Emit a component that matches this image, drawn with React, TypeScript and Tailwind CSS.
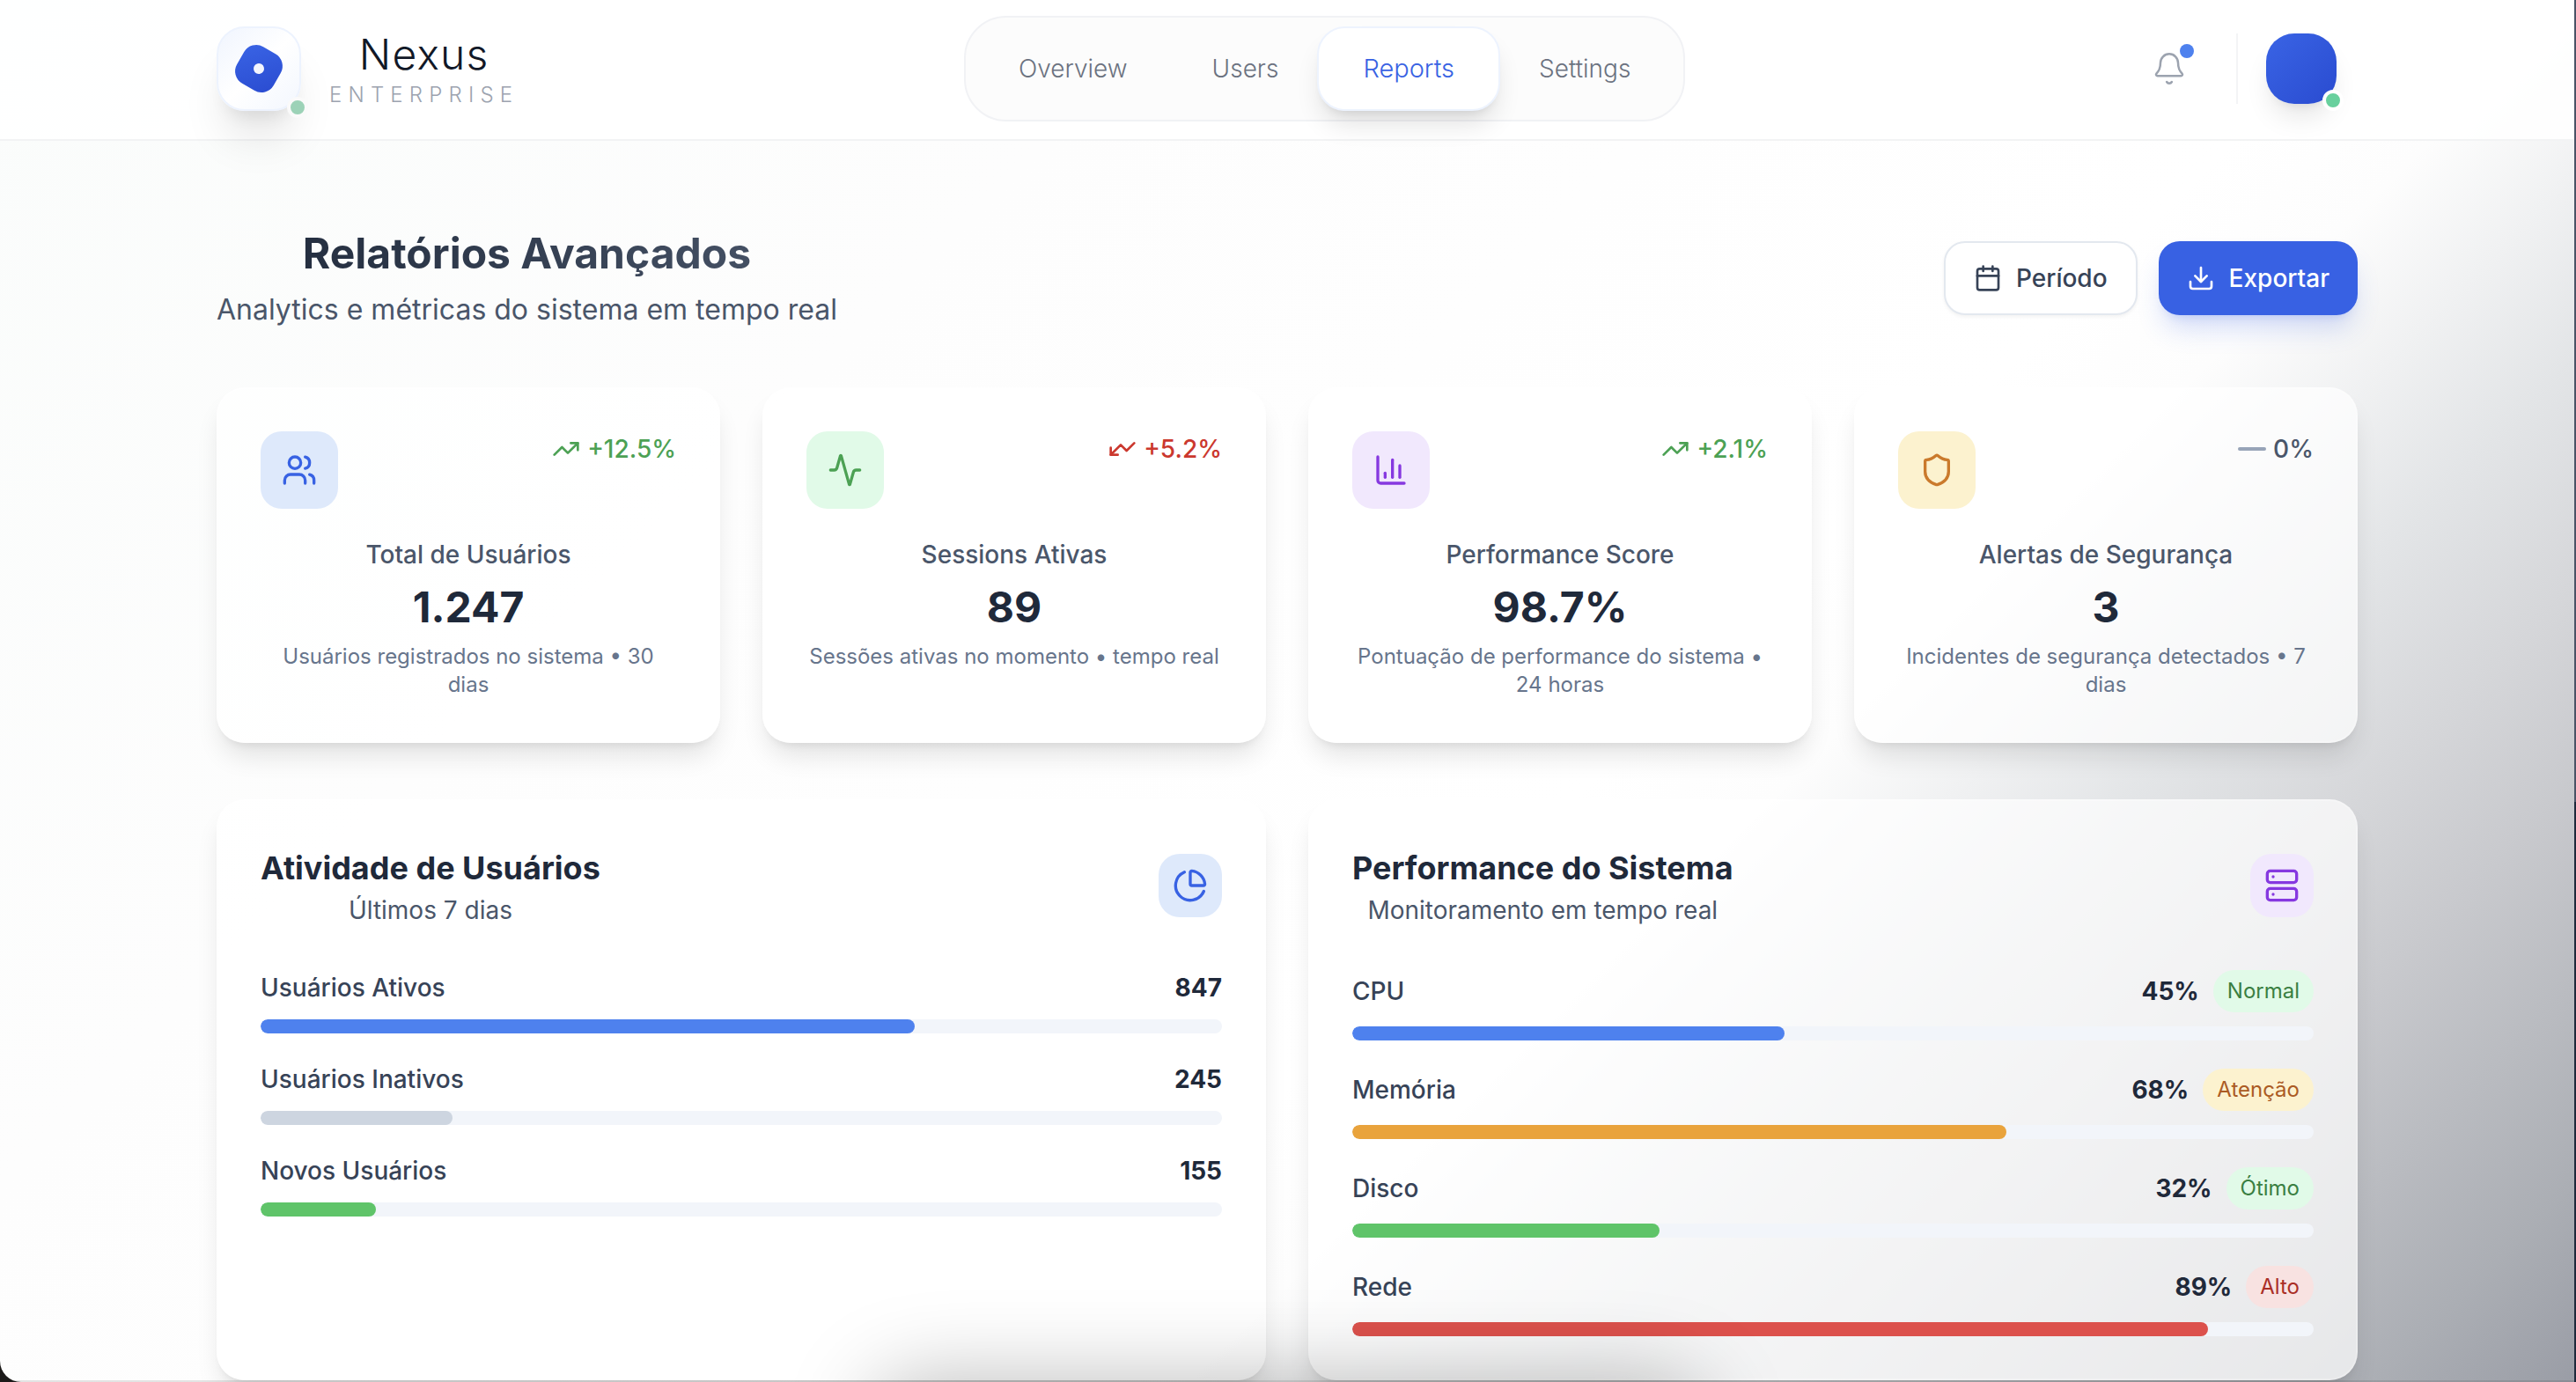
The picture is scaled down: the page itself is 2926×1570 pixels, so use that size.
import React from "react";
import {
  Activity,
  Bell,
  Calendar,
  ChartColumn,
  ChartPie,
  Download,
  Server,
  Shield,
  TrendingUp,
  Users,
  type LucideIcon,
} from "lucide-react";

const CARD =
  "rounded-[32px] border-2 border-white/20 bg-white/70 p-12 shadow-[0_20px_30px_-6px_rgba(0,0,0,0.11),0_8px_12px_-8px_rgba(0,0,0,0.11)]";

const navItems = ["Overview", "Users", "Reports", "Settings"];

type Trend = "up" | "down" | "flat";

interface Stat {
  title: string;
  value: string;
  note: string;
  change: string;
  trend: Trend;
  icon: LucideIcon;
  tone: string;
}

const stats: Stat[] = [
  {
    title: "Total de Usuários",
    value: "1.247",
    note: "Usuários registrados no sistema • 30 dias",
    change: "+12.5%",
    trend: "up",
    icon: Users,
    tone: "bg-[#dee9fb] text-[#3862e3]",
  },
  {
    title: "Sessions Ativas",
    value: "89",
    note: "Sessões ativas no momento • tempo real",
    change: "+5.2%",
    trend: "down",
    icon: Activity,
    tone: "bg-[#e1fae8] text-[#4ca154]",
  },
  {
    title: "Performance Score",
    value: "98.7%",
    note: "Pontuação de performance do sistema • 24 horas",
    change: "+2.1%",
    trend: "up",
    icon: ChartColumn,
    tone: "bg-[#f1e8fd] text-[#8638e0]",
  },
  {
    title: "Alertas de Segurança",
    value: "3",
    note: "Incidentes de segurança detectados • 7 dias",
    change: "0%",
    trend: "flat",
    icon: Shield,
    tone: "bg-[#fcf2cf] text-[#ca7a2c]",
  },
];

interface Metric {
  label: string;
  value: string;
  percent: number;
  fill: string;
  badge?: string;
  badgeTone?: string;
}

const activity: Metric[] = [
  { label: "Usuários Ativos", value: "847", percent: 68, fill: "bg-[#4e81ee]" },
  { label: "Usuários Inativos", value: "245", percent: 20, fill: "bg-[#cdd5e0]" },
  { label: "Novos Usuários", value: "155", percent: 12, fill: "bg-[#5fc469]" },
];

const system: Metric[] = [
  { label: "CPU", value: "45%", percent: 45, fill: "bg-[#4e81ee]", badge: "Normal", badgeTone: "bg-[#e1fae8] text-[#3a7f42]" },
  { label: "Memória", value: "68%", percent: 68, fill: "bg-[#e9a33c]", badge: "Atenção", badgeTone: "bg-[#fcf2cf] text-[#ab5b24]" },
  { label: "Disco", value: "32%", percent: 32, fill: "bg-[#5fc469]", badge: "Ótimo", badgeTone: "bg-[#e1fae8] text-[#3a7f42]" },
  { label: "Rede", value: "89%", percent: 89, fill: "bg-[#dc514c]", badge: "Alto", badgeTone: "bg-[#f8e2e1] text-[#aa2e26]" },
];

function Logo() {
  return (
    <div className="relative flex size-24 items-center justify-center rounded-[32px] border-2 border-[#edf3fe] bg-linear-to-br from-[#f0f5fe] via-white to-[#f3f7fe] shadow-[0_40px_50px_-10px_rgba(0,0,0,0.1),0_16px_20px_-12px_rgba(0,0,0,0.1)]">
      <div className="flex size-12 rotate-[30deg] items-center justify-center rounded-2xl bg-linear-to-br from-[#3a64e5] to-[#2a4bd0]">
        <span className="size-3 rounded-full bg-white/95" />
      </div>
      <span className="absolute -right-2.5 -bottom-2.5 size-6 rounded-full border-4 border-[#fafafa] bg-[#9cd2b7]" />
    </div>
  );
}

function Header() {
  return (
    <header className="relative z-10 border-b-2 border-[#f2f3f4] bg-white/90 pb-0.5">
      <div className="mx-auto flex h-[156px] max-w-[2560px] items-center justify-between px-16">
        <div className="flex items-center gap-8">
          <Logo />
          <div className="text-center">
            <div className="text-5xl leading-[60px] font-light tracking-wide text-[#111827]">Nexus</div>
            <div className="text-2xl leading-8 font-light tracking-[0.3em] text-[#9ca3af]">ENTERPRISE</div>
          </div>
        </div>

        <nav className="flex h-[120px] items-center rounded-[48px] border-2 border-[#f1f2f5] bg-[#fcfcfc] px-3">
          {navItems.map((item) =>
            item === "Reports" ? (
              <button
                key={item}
                type="button"
                aria-current="page"
                className="-mx-1 h-24 rounded-[32px] border-2 border-[#edf3fe] bg-white px-[50px] text-[29px] font-light text-[#3862e3] shadow-[0_20px_30px_-6px_rgba(0,0,0,0.12),0_8px_12px_-8px_rgba(0,0,0,0.12)]"
              >
                {item}
              </button>
            ) : (
              <button key={item} type="button" className="h-24 px-12 text-[28px] font-light text-[#6b7280]">
                {item}
              </button>
            ),
          )}
        </nav>

        <div className="flex items-center gap-8">
          <button type="button" aria-label="Notificações" className="relative p-6 text-[#9ca3af]">
            <Bell className="size-10" strokeWidth={1.5} />
            <span className="absolute top-4 right-4 size-4 rounded-full bg-[#4e81ee]" />
          </button>
          <span className="h-20 w-0.5 bg-[#f3f4f6]" />
          <button
            type="button"
            aria-label="Perfil"
            className="relative mr-6 size-20 rounded-[32px] bg-linear-to-br from-[#3a64e5] to-[#2a4bd0] shadow-[0_20px_30px_-6px_rgba(0,0,0,0.1),0_8px_12px_-8px_rgba(0,0,0,0.1)]"
          >
            <span className="absolute -right-2 -bottom-2 size-6 rounded-full border-4 border-white bg-[#68d09d]" />
          </button>
        </div>
      </div>
    </header>
  );
}

const trendTone: Record<Trend, string> = {
  up: "text-[#4ca154]",
  down: "text-[#cb382e]",
  flat: "text-[#4a566a]",
};

function TrendMark({ trend }: { trend: Trend }) {
  if (trend === "flat") return <span className="h-1 w-8 rounded-full bg-[#98a4b8]" />;
  return <TrendingUp className={trend === "down" ? "size-8 rotate-180" : "size-8"} />;
}

function StatCard({ stat }: { stat: Stat }) {
  const Icon = stat.icon;
  return (
    <article className={CARD}>
      <div className="mb-8 flex items-start justify-between">
        <div className={`rounded-3xl p-6 ${stat.tone}`}>
          <Icon className="size-10" />
        </div>
        <div className={`flex items-center gap-2 text-[28px] leading-10 font-medium ${trendTone[stat.trend]}`}>
          <TrendMark trend={stat.trend} />
          <span>{stat.change}</span>
        </div>
      </div>
      <div className="flex flex-col gap-2 text-center">
        <h3 className="text-[28px] leading-10 font-medium text-[#4a566a]">{stat.title}</h3>
        <p className="text-5xl leading-[64px] font-bold text-[#1f293a]">{stat.value}</p>
        <p className="text-2xl leading-8 text-[#67758c]">{stat.note}</p>
      </div>
    </article>
  );
}

function MetricRow({ metric }: { metric: Metric }) {
  return (
    <li>
      <div className="mb-4 flex items-center justify-between text-[28px] leading-10">
        <span className="font-medium text-[#374357]">{metric.label}</span>
        <div className="flex items-center gap-4">
          <span className="font-bold text-[#1f293a]">{metric.value}</span>
          {metric.badge && (
            <span className={`rounded-full px-4 py-2 text-2xl leading-8 ${metric.badgeTone}`}>{metric.badge}</span>
          )}
        </div>
      </div>
      <div
        role="progressbar"
        aria-label={metric.label}
        aria-valuenow={metric.percent}
        className="h-4 overflow-hidden rounded-full bg-[#f2f5fa]"
      >
        <div className={`h-full rounded-full ${metric.fill}`} style={{ width: `${metric.percent}%` }} />
      </div>
    </li>
  );
}

interface PanelProps {
  title: string;
  subtitle: string;
  icon: LucideIcon;
  tone: string;
  metrics: Metric[];
}

function Panel({ title, subtitle, icon: Icon, tone, metrics }: PanelProps) {
  return (
    <section className={CARD}>
      <div className="mb-12 flex items-center justify-between">
        <div className="text-center">
          <h2 className="text-4xl leading-[56px] font-bold text-[#1f293a]">{title}</h2>
          <p className="text-[28px] leading-10 text-[#4a566a]">{subtitle}</p>
        </div>
        <div className={`rounded-3xl p-4 ${tone}`}>
          <Icon className="size-10" />
        </div>
      </div>
      <ul className="flex flex-col gap-8">
        {metrics.map((metric) => (
          <MetricRow key={metric.label} metric={metric} />
        ))}
      </ul>
    </section>
  );
}

export default function App() {
  return (
    <div className="bg-[linear-gradient(to_bottom,#4a5366_58%,#1e293b_58%)] font-['Inter',sans-serif] antialiased">
      <div className="mr-0.5 bg-[#1c1a19]">
        <div className="relative min-h-screen overflow-hidden rounded-bl-3xl bg-[linear-gradient(135deg,#fafcfb_0%,#fdfdfd_30%,#ffffff_60%,#fdfdfd_65%,#e3e5e7_74%,#d5d6d9_80%,#c8c9cd_85%,#abaeb4_95%,#9a9da6_100%)]">
          <Header />
          <main className="mx-auto max-w-[2560px] px-16 pt-24">
            <div className="mb-16 flex items-center justify-between">
              <div className="text-center">
                <h1 className="bg-linear-to-r from-[#1f293a] to-[#4a566a] bg-clip-text text-5xl leading-[64px] font-bold text-transparent">
                  Relatórios Avançados
                </h1>
                <p className="mt-2 text-[32px] leading-[48px] text-[#4a566a]">
                  Analytics e métricas do sistema em tempo real
                </p>
              </div>
              <div className="flex gap-6 text-[28px] leading-10 font-medium">
                <button
                  type="button"
                  className="flex items-center gap-4 rounded-3xl border-2 border-[#e3e8ef] bg-white px-8 py-5 text-[#374357] shadow-[0_2px_4px_rgba(0,0,0,0.05)]"
                >
                  <Calendar className="size-8" />
                  Período
                </button>
                <button
                  type="button"
                  className="flex items-center gap-4 rounded-3xl bg-[#3861e3] px-8 text-white shadow-[0_20px_30px_-6px_rgba(56,97,227,0.22),0_8px_12px_-8px_rgba(56,97,227,0.22)]"
                >
                  <Download className="size-8" />
                  Exportar
                </button>
              </div>
            </div>

            <div className="mb-16 grid grid-cols-4 gap-12">
              {stats.map((stat) => (
                <StatCard key={stat.title} stat={stat} />
              ))}
            </div>

            <div className="grid grid-cols-2 gap-12">
              <Panel
                title="Atividade de Usuários"
                subtitle="Últimos 7 dias"
                icon={ChartPie}
                tone="bg-[#dee9fb] text-[#3862e3]"
                metrics={activity}
              />
              <Panel
                title="Performance do Sistema"
                subtitle="Monitoramento em tempo real"
                icon={Server}
                tone="bg-[#f1e8fd] text-[#8638e0]"
                metrics={system}
              />
            </div>
          </main>
          {/* Soft shade along the lower edge */}
          <div className="pointer-events-none absolute top-full left-1/2 h-40 w-[940px] -translate-x-1/2 rounded-[48px] shadow-[0_0_100px_rgba(0,0,0,0.28)]" />
          <div className="pointer-events-none absolute inset-x-0 bottom-0 h-0.5 bg-black/10" />
        </div>
      </div>
    </div>
  );
}
